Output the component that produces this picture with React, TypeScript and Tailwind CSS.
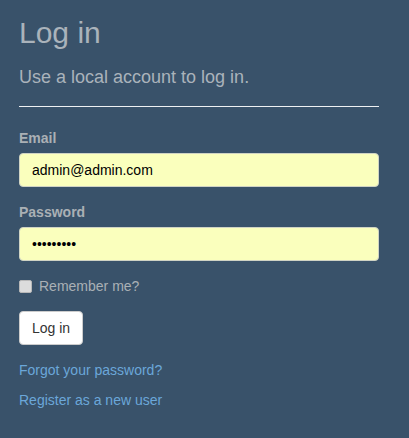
import React from "react";

export default function App() {
  return (
    <div
      className="w-full h-[438px] bg-[#39526a] overflow-hidden"
      style={{ fontFamily: '"Liberation Sans", Arial, sans-serif' }}
    >
      <div className="pl-[19px] w-[379px]">
        <h2 className="mt-4 text-[30px] leading-[33px] font-normal text-[#aab3bb]">Log in</h2>
        <h4 className="mt-[18px] text-[18px] leading-[20px] font-normal text-[#aab3bb]">
          Use a local account to log in.
        </h4>
        <div className="mt-[19px] h-px bg-[#eef0f2]" />
        <div className="mt-[21px]">
          <label className="block text-[14px] leading-[20px] font-bold text-[#aab0b5] mb-[5px]">Email</label>
          <input
            readOnly
            value="admin@admin.com"
            className="block w-full h-[34px] px-3 rounded-[4px] border border-[#cfd3c4] bg-[#faffbd] text-[14px] text-black outline-none"
            style={{ fontFamily: '"Liberation Sans", Arial, sans-serif' }}
          />
        </div>
        <div className="mt-[15px]">
          <label className="block text-[14px] leading-[20px] font-bold text-[#aab0b5] mb-[5px]">Password</label>
          <input
            readOnly
            value="•••••••••"
            className="block w-full h-[34px] px-3 rounded-[4px] border border-[#cfd3c4] bg-[#faffbd] text-[14px] text-black outline-none"
            style={{ fontFamily: '"Liberation Sans", Arial, sans-serif' }}
          />
        </div>
        <div className="mt-[15px] flex items-center h-[20px]">
          <span className="w-[13px] h-[13px] rounded-[2px] bg-[#dcdcdc] border border-[#b8b8b8] mt-[1px]" />
          <span className="ml-[7px] text-[14px] leading-[20px] text-[#aab0b5]">Remember me?</span>
        </div>
        <button className="mt-[15px] block h-[34px] px-3 rounded-[4px] border border-[#ccc] bg-white text-[14px] text-[#333]">
          Log in
        </button>
        <p className="mt-[15px] text-[14px] leading-[20px] text-[#6ba7d9]">Forgot your password?</p>
        <p className="mt-[10px] text-[14px] leading-[20px] text-[#6ba7d9]">Register as a new user</p>
      </div>
    </div>
  );
}
